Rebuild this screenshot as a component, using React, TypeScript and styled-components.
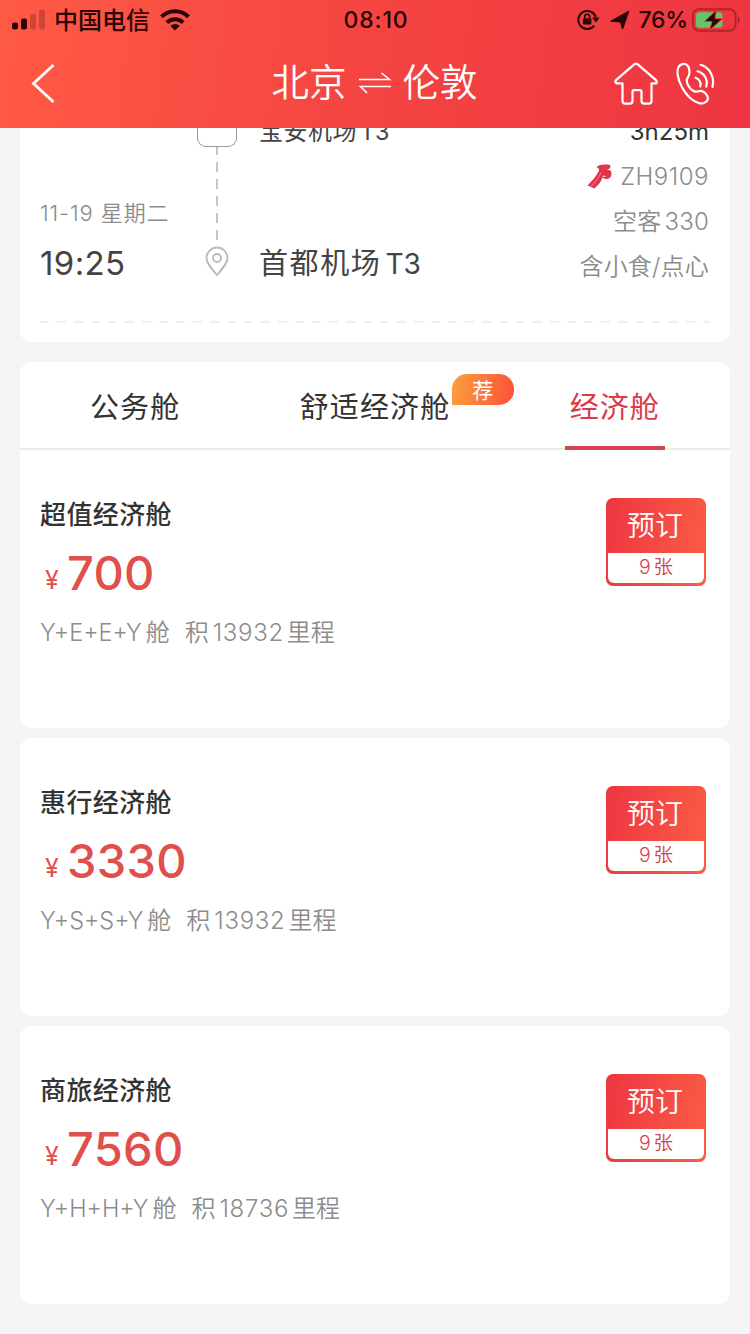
import React from 'react';
import styled, { createGlobalStyle } from 'styled-components';

const Global = createGlobalStyle`
  * { box-sizing: border-box; }
  body {
    margin: 0;
    background: #f5f5f5;
    font-family: Inter, "Noto Sans CJK SC", sans-serif;
    color: #444;
  }
`;

const Page = styled.div`
  width: 750px;
  height: 1334px;
  overflow: hidden;
  display: flex;
  flex-direction: column;
`;

const Header = styled.header`
  flex: none;
  height: 128px;
  background: linear-gradient(97deg, #ff5a45 0%, #f54642 45%, #ee3541 100%);
`;

const StatusBar = styled.div`
  height: 40px;
  padding: 0 10px 0 12px;
  display: grid;
  grid-template-columns: 1fr auto 1fr;
  align-items: center;
  color: #2a0606;
  font-size: 23px;
  font-weight: 500;
  line-height: 40px;
`;

const StatusGroup = styled.div<{ $end?: boolean }>`
  display: flex;
  align-items: center;
  justify-content: ${(p) => (p.$end ? 'flex-end' : 'flex-start')};
  height: 40px;
`;

const Carrier = styled.span`
  margin: 0 10px 0 8px;
  font-size: 24px;
  line-height: 41px;
`;

const Clock = styled.span`
  letter-spacing: 0.9px;
`;

const Battery = styled.span`
  margin: 0 4px 0 8px;
  letter-spacing: -0.2px;
`;

const NavBar = styled.nav`
  height: 88px;
  padding: 0 34px 0 30px;
  display: grid;
  grid-template-columns: 1fr auto 1fr;
  align-items: center;
`;

const Route = styled.h1`
  margin: 0;
  padding: 0 0 2px 3px;
  display: flex;
  align-items: center;
  gap: 11px;
  color: #fff;
  font-size: 37.5px;
  font-weight: 330;
  line-height: 84px;
`;

const NavActions = styled.div`
  display: flex;
  justify-content: flex-end;
  gap: 18px;
`;

const Content = styled.main`
  flex: 1;
  padding: 0 20px;
`;

const FlightCard = styled.section`
  height: 214px;
  overflow: hidden;
  border-radius: 0 0 12px 12px;
  background: #fff;
  padding: 0 21px 0 20px;
`;

const FlightBody = styled.div`
  height: 193px;
  display: grid;
  grid-template-columns: 157px 62px 1fr auto;
`;

const Arrival = styled.div`
  padding-top: 68px;
`;

const ArrivalDate = styled.div`
  font-size: 22px;
  font-weight: 330;
  line-height: 34px;
  color: #8c8c8c;
  letter-spacing: 0.9px;
`;

const ArrivalTime = styled.div`
  margin-top: 15px;
  font-size: 33px;
  line-height: 36px;
  letter-spacing: 0.4px;
`;

const Timeline = styled.div`
  display: flex;
  flex-direction: column;
  align-items: flex-start;
`;

const StopBox = styled.div`
  width: 40px;
  height: 19px;
  border: 1.5px solid #999;
  border-top: 0;
  border-radius: 0 0 9px 9px;
`;

const Track = styled.svg`
  margin-left: 6px;
  display: block;
`;

const Airports = styled.div`
  display: flex;
  flex-direction: column;
  font-weight: 370;
`;

const Airport = styled.div<{ $small?: boolean }>`
  display: flex;
  gap: ${(p) => (p.$small ? 3 : 4)}px;
  margin-top: ${(p) => (p.$small ? -17 : 90)}px;
  font-size: ${(p) => (p.$small ? 24 : 29)}px;
  letter-spacing: ${(p) => (p.$small ? 0.5 : 1.6)}px;
  line-height: 42px;
`;

const Terminal = styled.span`
  font-size: 0.97em;
  letter-spacing: -0.1px;
`;

const Facts = styled.div`
  margin-top: -19px;
  display: flex;
  flex-direction: column;
  align-items: flex-end;
  font-size: 24px;
  font-weight: 330;
  line-height: 45px;
  color: #8c8c8c;
`;

const Duration = styled.div`
  color: #333;
  font-weight: 400;
`;

const Fact = styled.div`
  display: flex;
  align-items: center;
  gap: 3px;
  letter-spacing: 0.2px;
`;

const FlightNumber = styled.span`
  margin-left: 5px;
  letter-spacing: 0.5px;
`;

const Perforation = styled.svg`
  display: block;
`;

const Tabs = styled.div`
  height: 88px;
  margin-top: 20px;
  border-radius: 12px 12px 0 0;
  background: #fff;
  border-bottom: 2px solid #ebebeb;
  display: flex;
  justify-content: space-between;
  padding: 0 65px;
`;

const Tab = styled.div<{ $active?: boolean }>`
  position: relative;
  height: 88px;
  padding: 0 5px;
  border-bottom: 4px solid ${(p) => (p.$active ? '#d6434f' : 'transparent')};
  color: ${(p) => (p.$active ? '#dc3a48' : '#333')};
  font-size: 29px;
  font-weight: 370;
  letter-spacing: 1.1px;
  line-height: 92px;
`;

const Badge = styled.span`
  position: absolute;
  left: 157px;
  top: 12px;
  width: 62px;
  height: 31px;
  border-radius: 15px 15px 15px 0;
  background: linear-gradient(100deg, #fba13d, #fc4f3a);
  color: #fff;
  font-size: 21px;
  letter-spacing: 0;
  line-height: 33px;
  text-align: center;
`;

const FareCard = styled.section<{ $joined?: boolean }>`
  height: 278px;
  margin-bottom: 10px;
  padding: 48px 24px 0 20px;
  border-radius: ${(p) => (p.$joined ? '0 0 12px 12px' : '12px')};
  background: #fff;
  display: flex;
  justify-content: space-between;
  align-items: flex-start;
`;

const FareName = styled.h2`
  margin: 0;
  font-size: 26px;
  font-weight: 460;
  letter-spacing: 0.4px;
  line-height: 34px;
  color: #333;
`;

const Price = styled.div`
  margin-top: 13px;
  padding-left: 5px;
  display: flex;
  align-items: baseline;
  gap: 8px;
  color: #df504d;
  font-size: 47px;
  font-weight: 480;
  letter-spacing: 0.3px;
  line-height: 56px;
`;

const Currency = styled.span`
  position: relative;
  top: -1px;
  font-size: 25px;
  font-weight: 400;
  line-height: 30px;
`;

const FareDetail = styled.div`
  display: flex;
  margin-top: 14px;
  font-size: 24px;
  font-weight: 330;
  line-height: 35px;
  color: #8c8c8c;
`;

const CabinCode = styled.span`
  margin-right: 4px;
  font-size: 23.5px;
`;

const Miles = styled.span`
  margin: 0 3px 0 4px;
  letter-spacing: 0.7px;
`;

const MilesLabel = styled.span`
  margin-left: 15px;
`;

const BookButton = styled.button`
  width: 100px;
  height: 88px;
  padding: 0 2px 3px;
  border: 0;
  border-radius: 7px;
  background: linear-gradient(100deg, #ee3541, #fb5d45);
  font-family: inherit;
  display: flex;
  flex-direction: column;
`;

const BookLabel = styled.span`
  height: 55px;
  width: 100%;
  padding-right: 2px;
  color: #fff;
  font-size: 28px;
  font-weight: 330;
  line-height: 56px;
`;

const Seats = styled.span`
  display: flex;
  justify-content: center;
  gap: 3px;
  width: 100%;
  height: 30px;
  border-radius: 0 0 6px 6px;
  background: #fff;
  color: #d4434f;
  font-size: 19.5px;
  font-weight: 350;
  line-height: 28px;
`;

const fares = [
  { name: '超值经济舱', price: '700', code: 'Y+E+E+Y', miles: '13932' },
  { name: '惠行经济舱', price: '3330', code: 'Y+S+S+Y', miles: '13932' },
  { name: '商旅经济舱', price: '7560', code: 'Y+H+H+Y', miles: '18736' },
];

const SignalIcon = () => (
  <svg width="34" height="23" viewBox="0 0 34 23" fill="#2a0606">
    <rect x="0" y="13.5" width="6" height="7" rx="2" />
    <rect x="9" y="9.5" width="6" height="11" rx="2" />
    <rect x="18" y="5" width="6" height="15.5" rx="2" opacity=".22" />
    <rect x="27" y="0.5" width="6" height="20" rx="2" opacity=".22" />
  </svg>
);

const WifiIcon = () => (
  <svg width="30" height="24" viewBox="0 0 30 24" fill="none" stroke="#2a0606" strokeWidth="4">
    <path d="M1.5 8.7a19.4 19.4 0 0 1 27 0" />
    <path d="M6.8 14.6a11.8 11.8 0 0 1 16.4 0" />
    <path d="M15 22.5l-4.6-4.6a6.6 6.6 0 0 1 9.2 0z" fill="#2a0606" stroke="none" />
  </svg>
);

const LockIcon = () => (
  <svg width="23" height="22" viewBox="0 0 23 22" fill="none" stroke="#2a0606" strokeWidth="2">
    <path d="M17.3 16.6a9 9 0 1 1 1.5-8.6" />
    <path d="M15.2 8.6h7.4l-3.7 5z" fill="#2a0606" stroke="none" />
    <rect x="6" y="9.2" width="8.4" height="6.4" rx="1" fill="#2a0606" stroke="none" />
    <path d="M7.8 9.5V7.6a2.4 2.4 0 0 1 4.8 0v1.9" strokeWidth="1.6" />
  </svg>
);

const Arrow = styled.svg`
  margin-left: 10px;
`;

const LocationIcon = () => (
  <Arrow width="20" height="20" viewBox="0 0 20 20">
    <path d="M18.5 1.5L12.6 18.5 10.6 11.8 1.2 11z" fill="#2a0606" stroke="#2a0606" strokeWidth="1.4" strokeLinejoin="round" />
  </Arrow>
);

const BatteryIcon = () => (
  <svg width="48" height="24" viewBox="0 0 48 24">
    <rect x="1" y="1.2" width="42.5" height="21.6" rx="6" fill="none" stroke="#b4232b" strokeWidth="2" />
    <path d="M45.8 8.6c2.2 1 2.2 5.8 0 6.8z" fill="#a01f27" />
    <rect x="4" y="4.2" width="26.5" height="15.6" rx="3.5" fill="#66c466" />
    <path d="M24.5 2L12.5 13.5h7.5L17.5 22.5 30.5 10.5h-7.5z" fill="#2a0606" stroke="#ef3b42" strokeWidth="1" />
  </svg>
);

const BackIcon = () => (
  <svg width="26" height="40" viewBox="0 0 26 40" fill="none" stroke="#fff" strokeWidth="2.8">
    <path d="M23.5 1L3.500 19.500l20 18.500" />
  </svg>
);

const SwapIcon = () => (
  <svg width="34" height="22" viewBox="0 0 34 22" fill="none" stroke="#fff" strokeWidth="1.6">
    <path d="M1 7.5h30.500L23.500 1" />
    <path d="M33 14.500H2.500L9 21" />
  </svg>
);

const HomeIcon = () => (
  <svg width="44" height="44" viewBox="0 0 44 44" fill="none" stroke="#fff" strokeWidth="2.2" strokeLinejoin="round">
    <path d="M20.500 2.200q1.500-1.200 3 0L42 18.200q1.500 1.800 0 3.200h-4.500v17.700q0 2.500-2.500 2.500h-5q-2.500 0-2.500-2.500v-9.500q0-1.500-1.500-1.500h-6q-1.500 0-1.500 1.500v9.500q0 2.500-2.500 2.500h-5q-2.500 0-2.500-2.500V21.400H3q-2.500-1-1-3.200z" />
  </svg>
);

const PhoneIcon = () => (
  <svg width="40" height="44" viewBox="0 0 40 44" fill="none" stroke="#fff" strokeWidth="2.2" strokeLinecap="round" strokeLinejoin="round">
    <path d="M4.500 3C8 .8 12 2 13 6.500c1 4.300.8 6.300-1 8.700-1.600 2.200-1.700 4-.4 7 1.400 3 4 6 7 7.200 2.600 1 4.500-.8 6.500-.6 3.200.4 6.600 4.200 6.800 7.200.2 3.800-4.500 6.200-8.800 5.200-6-1.500-13-8-17-15.600C2.200 18-1.200 6.800 4.500 3z" />
    <path d="M19.500 15.800c3.800 1 5.900 4.900 4.800 8.700" />
    <path d="M21.500 9.300c7 1.700 10.700 8.600 8.700 15.400" />
    <path d="M24.500 2.800c9.400 2.700 14.300 12.200 12 22.200" />
  </svg>
);

const TrackLine = () => (
  <Track width="28" height="130" viewBox="0 0 28 130" fill="none" stroke="#bbb">
    <path d="M14 0V95" strokeWidth="1.7" strokeDasharray="10 7" strokeDashoffset="2" />
    <g strokeWidth="1.9">
      <path d="M14 128C8 121 3.500 116 3.500 111a10.500 10.500 0 0 1 21 0c0 5-4.500 10-10.500 17z" />
      <circle cx="14" cy="111" r="4" />
    </g>
  </Track>
);

const AirlineLogo = () => (
  <svg width="25" height="25" viewBox="0 0 25 25">
    <path
      d="M9.500 3.500C12 .5 16 .3 22 .8c2 .4 1.800 2.700.4 3.900-1 .8-2.600 1-3.900 1.300 3.500-.7 5.700.6 6 3 .3 3.500-1.500 5.700-4.700 6-2.500.2-4-.8-4.300-2.200 1.500.2 3.300 0 4-1-1.300.4-2.500.2-3.500-.2C15 17 11.500 21 7.500 24.500L.5 21.500C5 17 9 12.500 11.500 7.800 12.800 5.500 12 4 9.500 3.500z"
      fill="#e2344b"
    />
    <path d="M4 22.300C9 17.500 12.300 13 14 8.500" fill="none" stroke="#fff" strokeWidth=".7" opacity=".6" />
  </svg>
);

export default function App() {
  return (
    <Page>
      <Global />
      <Header>
        <StatusBar>
          <StatusGroup>
            <SignalIcon />
            <Carrier>中国电信</Carrier>
            <WifiIcon />
          </StatusGroup>
          <Clock>08:10</Clock>
          <StatusGroup $end>
            <LockIcon />
            <LocationIcon />
            <Battery>76%</Battery>
            <BatteryIcon />
          </StatusGroup>
        </StatusBar>
        <NavBar>
          <BackIcon />
          <Route>
            <span>北京</span>
            <SwapIcon />
            <span>伦敦</span>
          </Route>
          <NavActions>
            <HomeIcon />
            <PhoneIcon />
          </NavActions>
        </NavBar>
      </Header>
      <Content>
        <FlightCard>
          <FlightBody>
            <Arrival>
              <ArrivalDate>11-19 星期二</ArrivalDate>
              <ArrivalTime>19:25</ArrivalTime>
            </Arrival>
            <Timeline>
              <StopBox />
              <TrackLine />
            </Timeline>
            <Airports>
              <Airport $small>
                宝安机场<Terminal>T3</Terminal>
              </Airport>
              <Airport>
                首都机场<Terminal>T3</Terminal>
              </Airport>
            </Airports>
            <Facts>
              <Duration>3h25m</Duration>
              <Fact>
                <AirlineLogo />
                <FlightNumber>ZH9109</FlightNumber>
              </Fact>
              <Fact>
                <span>空客</span>
                <span>330</span>
              </Fact>
              <Fact>含小食/点心</Fact>
            </Facts>
          </FlightBody>
          <Perforation width="670" height="2">
            <path d="M0 1H670" stroke="#ebebeb" strokeWidth="1.5" strokeDasharray="9 8" />
          </Perforation>
        </FlightCard>
        <Tabs>
          <Tab>公务舱</Tab>
          <Tab>
            舒适经济舱<Badge>荐</Badge>
          </Tab>
          <Tab $active>经济舱</Tab>
        </Tabs>
        {fares.map((fare, i) => (
          <FareCard key={fare.name} $joined={i === 0}>
            <div>
              <FareName>{fare.name}</FareName>
              <Price>
                <Currency>¥</Currency>
                {fare.price}
              </Price>
              <FareDetail>
                <CabinCode>{fare.code}</CabinCode>舱
                <MilesLabel>积</MilesLabel>
                <Miles>{fare.miles}</Miles>里程
              </FareDetail>
            </div>
            <BookButton>
              <BookLabel>预订</BookLabel>
              <Seats>
                <span>9</span>
                <span>张</span>
              </Seats>
            </BookButton>
          </FareCard>
        ))}
      </Content>
    </Page>
  );
}
